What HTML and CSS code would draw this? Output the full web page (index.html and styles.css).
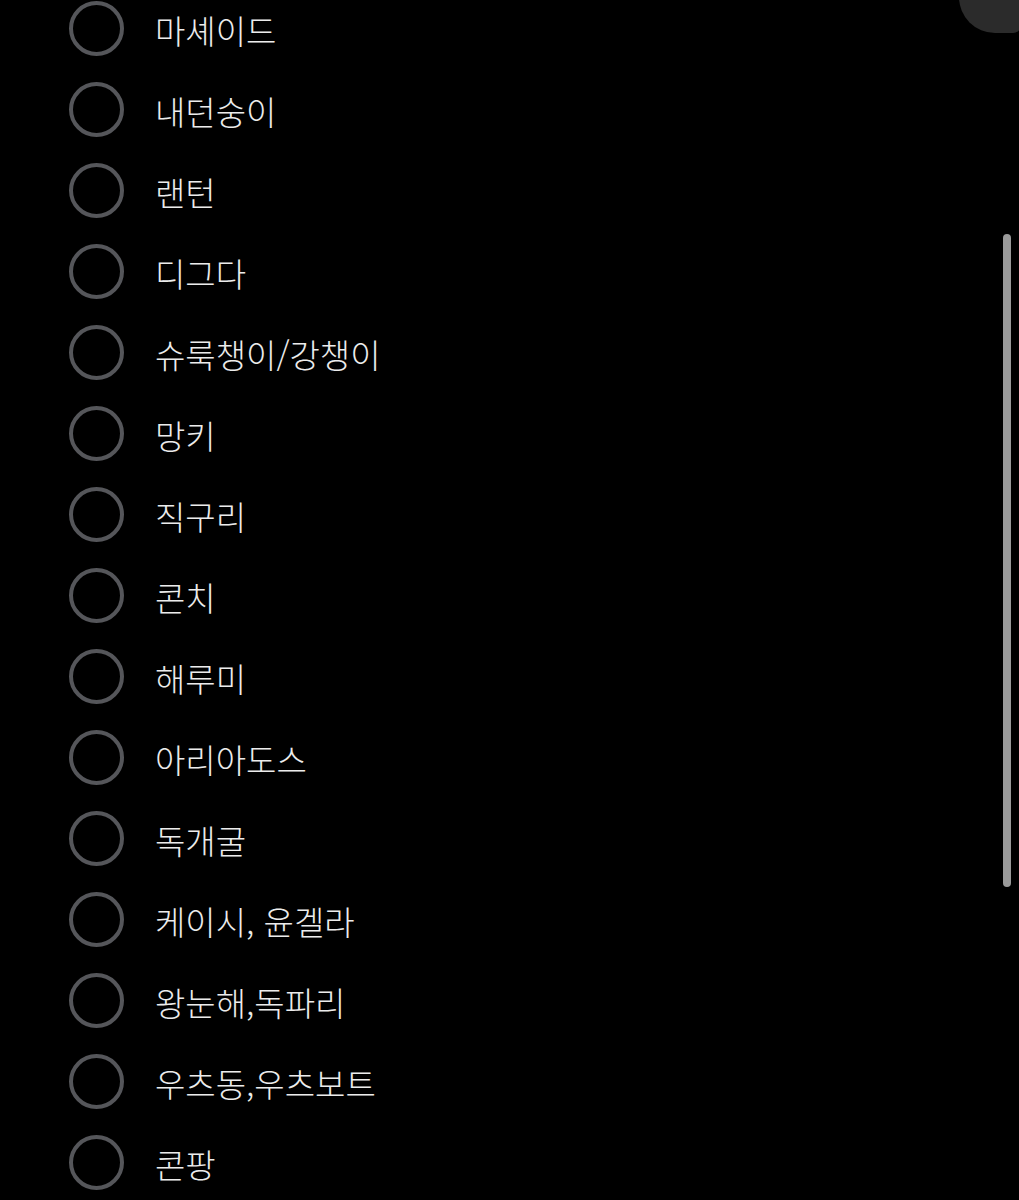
FILE: index.html
```html
<!DOCTYPE html>
<html lang="ko">
<head>
    <meta charset="UTF-8">
    <meta name="viewport" content="width=device-width, initial-scale=1.0">
    <title>목록</title>
    <link rel="stylesheet" href="styles.css">
</head>
<body>
    <div class="corner"></div>
    <div class="scrollbar"></div>

    <ul class="options">
        <li class="option"><span class="radio"></span><span class="label">마셰이드</span></li>
        <li class="option"><span class="radio"></span><span class="label">내던숭이</span></li>
        <li class="option"><span class="radio"></span><span class="label">랜턴</span></li>
        <li class="option"><span class="radio"></span><span class="label">디그다</span></li>
        <li class="option"><span class="radio"></span><span class="label">슈룩챙이/강챙이</span></li>
        <li class="option"><span class="radio"></span><span class="label">망키</span></li>
        <li class="option"><span class="radio"></span><span class="label">직구리</span></li>
        <li class="option"><span class="radio"></span><span class="label">콘치</span></li>
        <li class="option"><span class="radio"></span><span class="label">해루미</span></li>
        <li class="option"><span class="radio"></span><span class="label">아리아도스</span></li>
        <li class="option"><span class="radio"></span><span class="label">독개굴</span></li>
        <li class="option"><span class="radio"></span><span class="label">케이시, 윤겔라</span></li>
        <li class="option"><span class="radio"></span><span class="label">왕눈해,독파리</span></li>
        <li class="option"><span class="radio"></span><span class="label">우츠동,우츠보트</span></li>
        <li class="option"><span class="radio"></span><span class="label">콘팡</span></li>
    </ul>
</body>
</html>
```

FILE: styles.css
```css
html, body {
    background-color: #000;
}
body {
    margin: 0;
    height: 1200px;
    overflow: hidden;
    position: relative;
    font-family: "Noto Sans CJK KR", "Noto Sans", sans-serif;
    color: #ececec;
}
.options {
    list-style: none;
    margin: -12px 0 0 0; /* список прокручен, первая строка срезана */
    padding: 0;
}
.option {
    display: flex;
    align-items: center;
    height: 81px;
    padding-left: 69px;
}
.radio {
    flex: none;
    box-sizing: border-box;
    width: 55px;
    height: 55px;
    border: 4px solid #55565a;
    border-radius: 50%;
}
.label {
    margin-left: 31px;
    padding-top: 4px;
    font-size: 33px;
    font-weight: 300;
    line-height: 1;
}
/* плавающая кнопка сверху справа */
.corner {
    position: absolute;
    top: -40px;
    left: 959px;
    width: 62px;
    height: 73px;
    background-color: #2b2b2b;
    border-radius: 0 0 8px 36px;
}
.scrollbar {
    position: absolute;
    top: 234px;
    left: 1003px;
    width: 8px;
    height: 653px;
    background-color: #9a9a9a;
    border-radius: 4px;
}
```
